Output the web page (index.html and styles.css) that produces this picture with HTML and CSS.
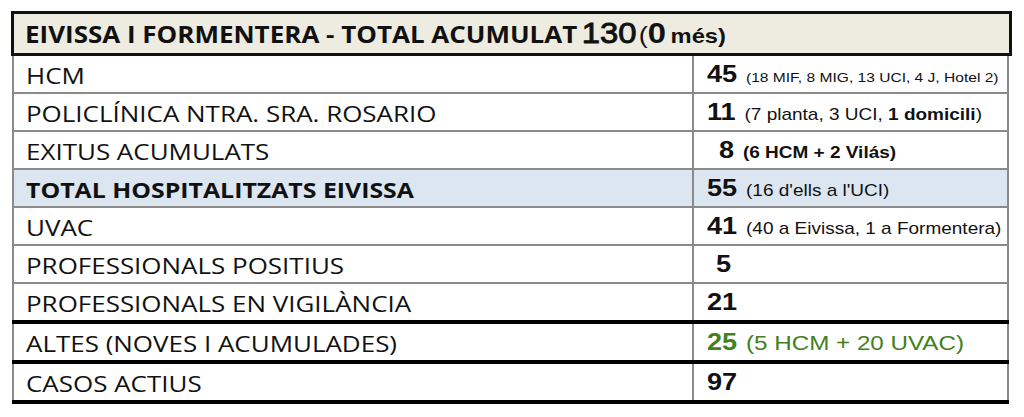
FILE: index.html
```html
<!DOCTYPE html>
<html lang="ca">
<head>
<meta charset="utf-8">
<title>Eivissa i Formentera - Total acumulat</title>
<link rel="stylesheet" href="styles.css">
</head>
<body>
<div class="sheet">
  <div class="title">
    <span class="fit fit-title"><span class="title-text">EIVISSA I FORMENTERA - TOTAL ACUMULAT</span> <span class="total">130</span><span class="paren">(</span><span class="zero">0</span> <span class="mes">més)</span></span>
  </div>
  <table class="data">
    <tr>
      <td class="label"><span class="fit">HCM</span></td>
      <td class="val"><span class="fit"><b class="num">45</b> <span class="note xs">(18 MIF, 8 MIG, 13 UCI, 4 J, Hotel 2)</span></span></td>
    </tr>
    <tr>
      <td class="label"><span class="fit">POLICLÍNICA NTRA. SRA. ROSARIO</span></td>
      <td class="val"><span class="fit"><b class="num">11</b> <span class="note sm">(7 planta, 3 UCI, <b>1 domicili</b>)</span></span></td>
    </tr>
    <tr>
      <td class="label"><span class="fit">EXITUS ACUMULATS</span></td>
      <td class="val val-indent"><span class="fit"><b class="num">8</b> <span class="note sm bold">(6 HCM + 2 Vilás)</span></span></td>
    </tr>
    <tr class="highlight">
      <td class="label bold"><span class="fit fit-bold">TOTAL HOSPITALITZATS EIVISSA</span></td>
      <td class="val"><span class="fit"><b class="num">55</b> <span class="note sm">(16 d'ells a l'UCI)</span></span></td>
    </tr>
    <tr>
      <td class="label"><span class="fit">UVAC</span></td>
      <td class="val"><span class="fit"><b class="num">41</b> <span class="note sm">(40 a Eivissa, 1 a Formentera)</span></span></td>
    </tr>
    <tr>
      <td class="label"><span class="fit">PROFESSIONALS POSITIUS</span></td>
      <td class="val val-indent2"><span class="fit"><b class="num">5</b></span></td>
    </tr>
    <tr>
      <td class="label"><span class="fit">PROFESSIONALS EN VIGILÀNCIA</span></td>
      <td class="val"><span class="fit"><b class="num">21</b></span></td>
    </tr>
    <tr class="thick">
      <td class="label"><span class="fit">ALTES (NOVES I ACUMULADES)</span></td>
      <td class="val green"><span class="fit"><b class="num">25</b> <span class="note md">(5 HCM + 20 UVAC)</span></span></td>
    </tr>
    <tr class="thick last">
      <td class="label"><span class="fit">CASOS ACTIUS</span></td>
      <td class="val"><span class="fit"><b class="num">97</b></span></td>
    </tr>
  </table>
</div>
</body>
</html>
```

FILE: styles.css
```css
html, body {
  margin: 0;
  padding: 0;
  background: #ffffff;
}

.sheet {
  padding: 11px 0 0 11px;
  width: 1001px;
}

/* the source is a horizontally widened spreadsheet capture */
.fit {
  display: inline-block;
  transform: scaleX(1.18);
  transform-origin: 0 50%;
  white-space: nowrap;
}

.fit-title {
  transform: scaleX(1.13);
}

.fit-bold {
  transform: scaleX(1.13);
}

.title {
  box-sizing: border-box;
  height: 45px;
  border: 3px solid #111;
  background: #eeece1;
  padding: 0 0 0 11px;
  display: flex;
  align-items: center;
  color: #111;
  white-space: nowrap;
}

.title-text {
  font-family: "Open Sans", "Liberation Sans", sans-serif;
  font-weight: 700;
  font-size: 23px;
}

.total {
  font-family: "Liberation Sans", Arial, sans-serif;
  font-size: 29px;
  font-weight: 400;
  -webkit-text-stroke: 0.9px #111;
}

.paren {
  font-family: "Liberation Sans", Arial, sans-serif;
  font-size: 24px;
  margin-left: 2px;
}

.zero {
  font-family: "Liberation Sans", Arial, sans-serif;
  font-size: 29px;
  font-weight: 700;
}

.mes {
  font-family: "Liberation Sans", Arial, sans-serif;
  font-size: 21px;
  font-weight: 700;
}

.data {
  border-collapse: collapse;
  margin-left: 1px;
  width: 997px;
  table-layout: fixed;
  color: #111;
}

.data td {
  border: 2px solid #8a8a8a;
  height: 35px;
  padding: 1px 0 0 0;
  white-space: nowrap;
  overflow: visible;
}

.data tr:first-child td {
  border-top: none;
}

.label {
  width: 666px;
  padding-left: 12px !important;
  font-family: "Open Sans", "Liberation Sans", sans-serif;
  font-size: 22px;
}

.bold {
  font-weight: 700;
}

.val {
  padding-left: 13px !important;
  font-family: "Liberation Sans", Arial, sans-serif;
}

.val-indent {
  padding-left: 25px !important;
}

.val-indent2 {
  padding-left: 22px !important;
}

.num {
  font-size: 23px;
  font-weight: 700;
}

.note {
  margin-left: 3px;
}

.xs {
  font-size: 13.2px;
}

.sm {
  font-size: 16.1px;
}

.md {
  font-size: 20.5px;
}

.green {
  color: #44801e;
}

.highlight td {
  background: #dce6f1;
}

.data tr.thick td {
  border-top: 4px solid #000;
}

.data tr.last td {
  border-bottom: 4px solid #000;
}
```
